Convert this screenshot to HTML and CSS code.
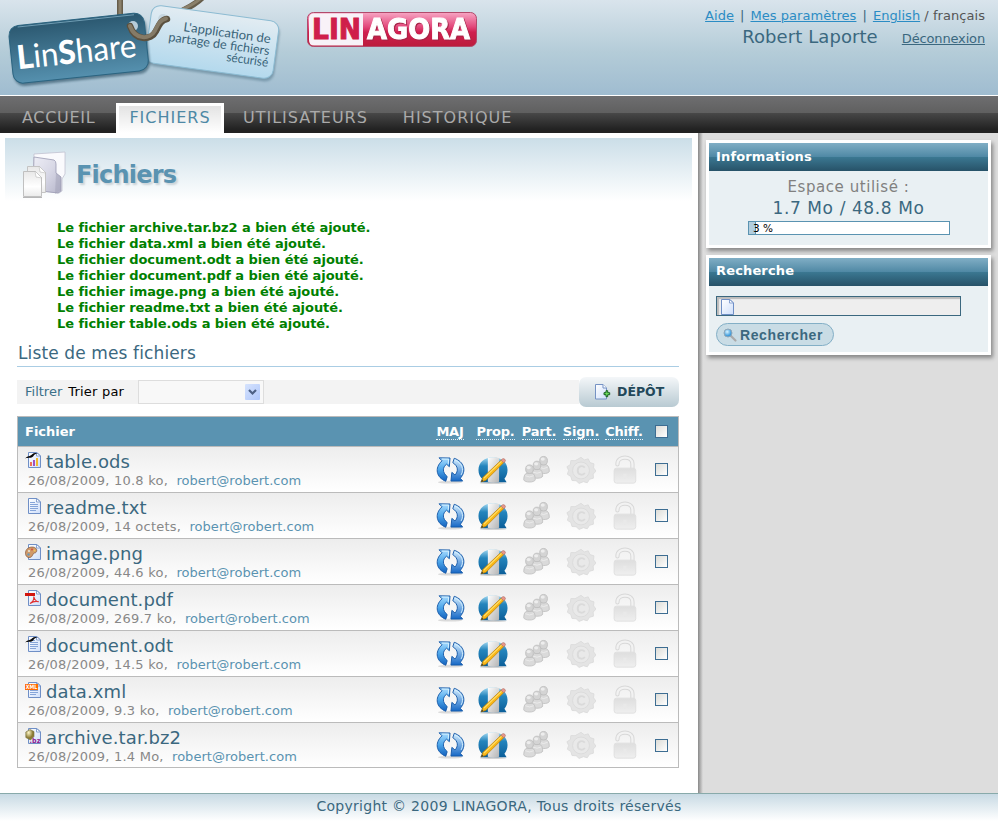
FILE: index.html
```
<!DOCTYPE html>
<html lang="fr">
<head>
<meta charset="utf-8">
<title>LinShare - Fichiers</title>
<link rel="stylesheet" href="styles.css">
</head>
<body>
<svg class="defs" width="0" height="0" aria-hidden="true">
  <defs>
    <linearGradient id="gPage" x2="1" y2="1"><stop offset="0" stop-color="#fff"/><stop offset="1" stop-color="#cfdffb"/></linearGradient>
    <linearGradient id="gBlue" x2="0" y2="1"><stop offset="0" stop-color="#a9dcff"/><stop offset=".5" stop-color="#4ca6ea"/><stop offset="1" stop-color="#1260bd"/></linearGradient>
    <linearGradient id="gBlueB" x2="0" y2="1"><stop offset="0" stop-color="#d4eeff"/><stop offset="1" stop-color="#1668c6"/></linearGradient>
    <linearGradient id="gOrb" x2="0" y2="1"><stop offset="0" stop-color="#a5daf2"/><stop offset=".35" stop-color="#2485bd"/><stop offset="1" stop-color="#0b5e99"/></linearGradient>
    <linearGradient id="gBand" x2="1" y2="1"><stop offset="0" stop-color="#fff"/><stop offset="1" stop-color="#b5b5b5"/></linearGradient>
    <linearGradient id="gGray" x2="0" y2="1"><stop offset="0" stop-color="#dedede"/><stop offset="1" stop-color="#efefef"/></linearGradient>
    <linearGradient id="gTag1" x2="0" y2="1"><stop offset="0" stop-color="#2b5870"/><stop offset="1" stop-color="#5590ae"/></linearGradient>
    <linearGradient id="gTag2" x2="0" y2="1"><stop offset="0" stop-color="#e2ecf2"/><stop offset="1" stop-color="#b4d9ed"/></linearGradient>
    <linearGradient id="gRed" x2="0" y2="1"><stop offset="0" stop-color="#f7a5c3"/><stop offset=".42" stop-color="#e2487b"/><stop offset=".58" stop-color="#cf1f4f"/><stop offset="1" stop-color="#bb1c3c"/></linearGradient>
    <linearGradient id="gFold" x2="1" y2="1"><stop offset="0" stop-color="#eeeef6"/><stop offset=".5" stop-color="#d8d8e6"/><stop offset="1" stop-color="#b6b6ca"/></linearGradient>
    <linearGradient id="gSheet" x2="0" y2="1"><stop offset="0" stop-color="#e8e8e8"/><stop offset=".6" stop-color="#fff"/><stop offset="1" stop-color="#eaeaea"/></linearGradient>
    <radialGradient id="gGold" cx=".35" cy=".3"><stop offset="0" stop-color="#fff8c8"/><stop offset="1" stop-color="#8b7b34"/></radialGradient>
    <radialGradient id="gLens" cx=".4" cy=".35"><stop offset="0" stop-color="#d9f3ff"/><stop offset="1" stop-color="#3f9cdc"/></radialGradient>
    <filter id="soft" x="-20%" y="-20%" width="140%" height="150%"><feGaussianBlur stdDeviation="1.3"/></filter>
  </defs>
  <symbol id="page" viewBox="0 0 16 16">
    <path d="M3.500.5h8.500l3.500 3.500v11.500h-12z" fill="url(#gPage)" stroke="#6f8fc6"/>
    <path d="M11.500.5v3.500h4z" fill="#fff" stroke="#6f8fc6" stroke-width=".8"/>
  </symbol>
  <symbol id="txt" viewBox="0 0 16 16"><use href="#page"/><path d="M5 4.500h5M5 6.500h8M5 8.500h8M5 10.500h8M5 12.500h6" stroke="#86a5d9"/></symbol>
  <symbol id="ods" viewBox="0 0 16 16"><use href="#page"/>
    <path d="M5 10h2v4H5z" fill="#ef7155"/><path d="M8 8h2v6H8z" fill="#a050c0"/><path d="M11 6h2v8h-2z" fill="#f2ba2d"/>
    <path d="M0 6.500C2.500 3.600 5 4.600 7.200 2.200 9 .6 11 .8 13 1.600c-2.500 0-3.700 1-4.700 2.600C6 7 3.500 4.900 0 6.500z" fill="#080808"/></symbol>
  <symbol id="odt" viewBox="0 0 16 16"><use href="#txt"/>
    <path d="M0 6.500C2.500 3.600 5 4.600 7.200 2.200 9 .6 11 .8 13 1.600c-2.500 0-3.700 1-4.700 2.600C6 7 3.500 4.900 0 6.500z" fill="#080808"/></symbol>
  <symbol id="png" viewBox="0 0 16 16"><use href="#page"/>
    <path d="M.6 8c.5-4 5.400-6 9-4.500C13 5 12 9 9.500 9c-2 0-1.500 4-4.500 4.500C2 14 0 11.500.6 8z" fill="#d09a6a" stroke="#86583b" stroke-width=".7"/>
    <circle cx="4" cy="7" r="1.100" fill="#e8e6d8"/><circle cx="7" cy="5.500" r="1" fill="#d64e3f"/><circle cx="9.500" cy="6.500" r="1" fill="#f0c65c"/><circle cx="3.500" cy="10.500" r="1.200" fill="#6a97b7"/></symbol>
  <symbol id="pdf" viewBox="0 0 16 16"><use href="#page"/>
    <path d="M0 3h10v3H0z" fill="#d2150f"/><path d="M5 13.500c3-1.500 4-4.500 3.800-7 .7 3 2.200 5 5 5.300-3-1-6-.2-8.800 1.700z" fill="none" stroke="#e03030" stroke-width="1.100"/></symbol>
  <symbol id="xml" viewBox="0 0 16 16"><use href="#txt"/><path d="M0 2h13v6H0z" fill="#ff6a00"/></symbol>
  <symbol id="bz" viewBox="0 0 16 16"><use href="#page"/>
    <path d="M5 1.500l4 2v5L5.500 12 .8 9.500V4z" fill="url(#gGold)" stroke="#77703e" stroke-width=".6"/></symbol>
  <symbol id="refresh" viewBox="0 0 32 32">
    <ellipse cx="16" cy="29" rx="13" ry="1.500" fill="#aaa" opacity=".4"/>
    <path d="M4.300 3L16 3.200l-.7 9.300-3-2.700C8 13 7.500 18.500 13 23l-1.500 5C1.500 24-1 14 7.500 6.200z" fill="url(#gBlue)" stroke="#1559a8" stroke-linejoin="round"/>
    <path d="M20.500 3.500C31 7 34 17 27 24.800l2.500 3H17l1-9.300 3.300 2.800C25 17.500 25 12 19 8.200z" fill="url(#gBlueB)" stroke="#1559a8" stroke-linejoin="round"/>
    <path d="M7.500 4.300l7 .1-.3 5M21.300 5.300c7.500 3.500 10 10 6.500 16" stroke="#d8f2ff" fill="none"/>
  </symbol>
  <symbol id="edit" viewBox="0 0 32 32">
    <ellipse cx="16" cy="29.800" rx="14" ry="1.200" fill="#aaa" opacity=".5"/>
    <path d="M.5 16C.5 8 7 2.500 16 2.500S31.500 8 31.500 16c0 4-1.500 7-3.300 9.300L30.500 29H2.500l1.800-3.700C2 23 .5 20 .5 16z" fill="url(#gOrb)"/>
    <path d="M10.500 3.300c4-1.200 8-1.200 12 0V28.500q-6 2-12 0z" fill="url(#gBand)"/>
    <path d="M3.500 28.700l1.800-4.900L25 5.200l2.600 2.700L8.500 27z" fill="#f9b717" stroke="#b67700" stroke-width=".7"/>
    <path d="M5.800 24.200L25.200 5.800l.8.800L6.800 25z" fill="#ffe06c"/>
    <path d="M24.500 5.700l1.700-1.600c1.500-1 3.800 1.200 2.900 2.600l-1.700 1.600z" fill="#e99589" stroke="#9a655e" stroke-width=".5"/>
    <path d="M3.500 28.700l.8-2.300 1.500 1.400z" fill="#333"/>
  </symbol>
  <symbol id="user" viewBox="0 0 16 24"><path d="M1 20c0-5 1.500-7.500 4-8.300h6c2.500.8 4 3.300 4 8.300-1 3.500-13 3.500-14 0z" fill="#dadada" stroke="#bebebe"/><ellipse cx="8" cy="7" rx="4.700" ry="5.200" fill="#d4d4d4" stroke="#bcbcbc"/><ellipse cx="7" cy="5" rx="2.500" ry="2" fill="#ededed"/><path d="M3 15q5 3 10 0" stroke="#eee" fill="none"/></symbol>
  <symbol id="share" viewBox="0 0 32 32"><use href="#user" x="16" y="0" width="14" height="21"/><use href="#user" x="9" y="5" width="14" height="21"/><use href="#user" x="1" y="9" width="14" height="21"/></symbol>
  <symbol id="seal" viewBox="0 0 32 32">
    <path d="M16 2.500l3.500 2.700 4.200-1.100 1.900 4 4.200 1.300-.4 4.300 2.600 3.500-3 3.100.2 4.400-4.200 1.200-2.300 3.700-4.200-1.200L14 30.300l-3.200-2.900-4.400-.2-1.200-4.200L1.500 20.500l1.300-4.100L1 12.500l3.700-2.300.5-4.300 4.400.2z" fill="#e4e4e4" stroke="#dcdcdc"/>
    <circle cx="16" cy="16.500" r="9" fill="#e9e9e9" stroke="#dbdbdb"/><path d="M20 13.500c-2.500-3-7.500-1.500-7.500 3s5 6 7.700 2.700" fill="none" stroke="#dadada" stroke-width="2"/>
  </symbol>
  <symbol id="lock" viewBox="0 0 32 32">
    <path d="M9 10V9.500c0-9 16-9 16 0V15" fill="none" stroke="#d8d8d8" stroke-width="4.500" stroke-linecap="round"/><path d="M9 10V9.500c0-9 16-9 16 0V15" fill="none" stroke="#f2f2f2" stroke-width="2.400" stroke-linecap="round"/>
    <rect x="5.500" y="14" width="23" height="16" rx="2.500" fill="url(#gGray)" stroke="#dfdfdf"/><path d="M17 20v5" stroke="#e9e9e9" stroke-width="3"/>
  </symbol>
</svg>

<header class="top">
  <svg class="logo" width="300" height="95" viewBox="0 0 300 95" role="img" aria-label="LinShare">
    <path d="M120-2v18M202-2c-6 6-12 9-20 13" fill="none" stroke="#665d4b" stroke-width="6"/>
    <path d="M120-2v16M201-2c-6 6-12 8-18 11" fill="none" stroke="#8a806b" stroke-width="3"/>
    <g transform="translate(152.500 4.500) rotate(7.800)">
      <rect x="1" y="3" width="129" height="58" rx="9" fill="#55788c" opacity=".55" filter="url(#soft)"/>
      <rect width="128.500" height="58" rx="9" fill="url(#gTag2)" stroke="#8cbbd2"/>
    </g>
    <g transform="translate(7.500 26.500) rotate(-6)">
      <rect x="1" y="3" width="137" height="58" rx="11" fill="#284b5f" opacity=".6" filter="url(#soft)"/>
      <rect x=".5" width="136" height="58" rx="10" fill="url(#gTag1)" stroke="#2b6480"/>
      <path d="M10 1.500h117" stroke="#6f9db4" fill="none"/>
    </g>
    <g class="tag-name" transform="rotate(-6 20 69)"><text x="18" y="69" textLength="120" lengthAdjust="spacingAndGlyphs"><tspan class="heavy">L</tspan>in<tspan class="heavy">S</tspan>hare</text></g>
    <g class="tag-line">
      <text transform="translate(183 31) rotate(8)" textLength="88" lengthAdjust="spacingAndGlyphs">L'application de</text>
      <text transform="translate(168 41) rotate(8)" textLength="102" lengthAdjust="spacingAndGlyphs">partage de fichiers</text>
      <text transform="translate(226 61) rotate(8)" textLength="42" lengthAdjust="spacingAndGlyphs">sécurisé</text>
    </g>
    <circle cx="133" cy="26" r="5" fill="#b5cbd8"/><circle cx="163" cy="19" r="5" fill="#c6d6df"/>
    <path d="M130 26c5 15 21 15 26 5 3-6 5-11 11-12" fill="none" stroke="#5b513f" stroke-width="6.500" stroke-linecap="round"/>
    <path d="M130 26c5 14 20 14 25 4.500 3-6 5-10.500 11-12" fill="none" stroke="#857b67" stroke-width="4" stroke-linecap="round"/>
  </svg>
  <svg class="brand" width="172" height="38" viewBox="0 0 172 38" role="img" aria-label="LINAGORA">
    <rect x="1.500" y="1.500" width="169" height="34" rx="6" fill="url(#gRed)" stroke="#b14a6b"/>
    <path d="M57 2.500H8q-5 0-5 5V29q0 5.500 5 5.500h49z" fill="#f8f2f8"/>
    <text class="brand-red" x="6" y="28" textLength="49" lengthAdjust="spacingAndGlyphs">LIN</text>
    <text class="brand-white" x="61" y="28" textLength="103" lengthAdjust="spacingAndGlyphs">AGORA</text>
  </svg>
  <div class="account">
    <div class="links"><a href="#">Aide</a><span class="bar">|</span><a href="#">Mes paramètres</a><span class="bar">|</span><a href="#">English</a> / français</div>
    <div class="who"><span class="user-name">Robert Laporte</span><a class="logout" href="#">Déconnexion</a></div>
  </div>
</header>

<nav class="menu">
  <a href="#" class="home">ACCUEIL</a><a href="#" class="active">FICHIERS</a><a href="#">UTILISATEURS</a><a href="#" class="history">HISTORIQUE</a>
</nav>

<div class="columns">
  <main class="main">
    <div class="title">
      <svg width="44" height="50" viewBox="0 0 44 50">
        <path d="M12 3l31-2v22l-3 5v12l-3 2-26-3z" fill="#fafafd" stroke="#c2c2d0" stroke-width=".8"/>
        <path d="M12 6l20 3q2 1 2 4v9l5 4v14l-3 2-25-3z" fill="url(#gFold)" stroke="#9a9ab2" stroke-width=".8"/>
        <path d="M34 22l5 4v13l-6 4z" fill="#9d9db4" opacity=".45"/>
        <path d="M5.500 15.500h12l6 6v20h-18z" fill="url(#gSheet)" stroke="#c4c4c4"/>
        <path d="M17 15l1 6 6 1z" fill="#fff" stroke="#bbb" stroke-width=".6"/>
        <path d="M1.500 20.500h12l6 6v19h-18z" fill="url(#gSheet)" stroke="#c0c0c0"/>
        <path d="M13 20l1 6 6 1z" fill="#fff" stroke="#bbb" stroke-width=".6"/>
        <path d="M1 46.500h19" stroke="#888" opacity=".6"/>
      </svg>
      <h1>Fichiers</h1>
    </div>
    <ul class="messages">
      <li>Le fichier archive.tar.bz2 a bien été ajouté.</li>
      <li>Le fichier data.xml a bien été ajouté.</li>
      <li>Le fichier document.odt a bien été ajouté.</li>
      <li>Le fichier document.pdf a bien été ajouté.</li>
      <li>Le fichier image.png a bien été ajouté.</li>
      <li>Le fichier readme.txt a bien été ajouté.</li>
      <li>Le fichier table.ods a bien été ajouté.</li>
    </ul>
    <h2>Liste de mes fichiers</h2>
    <div class="toolbar">
      <div class="filter"><span class="filter-link">Filtrer</span><span class="sort">Trier par</span>
        <div class="select"><span class="arrow"><svg width="15" height="16" viewBox="0 0 15 16"><path d="M4 6l3.500 3.500L11 6" fill="none" stroke="#4d6185" stroke-width="2.200"/></svg></span></div>
      </div>
      <a class="deposit" href="#"><svg width="16" height="16" viewBox="0 0 16 16"><path d="M.5.5h7.500l3.500 3.500v11H.5z" fill="url(#gPage)" stroke="#7592c4"/><path d="M8 .5v3.500h3.500" fill="#fff" stroke="#7592c4"/><path d="M11 6.700h1.700v2h2v2h-2v2H11v-2H9v-2h2z" fill="#6fe05c" stroke="#175f22"/></svg>DÉPÔT</a>
    </div>

    <section class="files">
      <div class="head"><span class="col-file">Fichier</span><span class="col"><abbr>MAJ</abbr></span><span class="col prop"><abbr>Prop.</abbr></span><span class="col part"><abbr>Part.</abbr></span><span class="col"><abbr>Sign.</abbr></span><span class="col"><abbr>Chiff.</abbr></span><span class="col"><i class="box"></i></span></div>
    </section>
  </main>

  <aside class="side">
    <section class="panel info">
      <h3>Informations</h3>
      <div class="panel-body">
        <div class="space-label">Espace utilisé :</div>
        <div class="space-value">1.7 Mo / 48.8 Mo</div>
        <div class="quota"><span>3 %</span></div>
      </div>
    </section>
    <section class="panel search">
      <h3>Recherche</h3>
      <div class="panel-body">
        <div class="field"><svg width="16" height="16"><use href="#page"/></svg></div>
        <a class="search-button" href="#"><svg width="16" height="16" viewBox="0 0 16 16"><path d="M9 9l4.500 4.500" stroke="#aaa" stroke-width="2.200" stroke-linecap="round"/><circle cx="6" cy="6" r="4" fill="url(#gLens)" stroke="#91a7b7"/></svg>Rechercher</a>
      </div>
    </section>
  </aside>
</div>
<footer>Copyright © 2009 LINAGORA, Tous droits réservés</footer>
<script src="files.js"></script>
</body>
</html>
```
FILE: files.js
```
const files = [
  ["ods", "table.ods", "10.8 ko"],
  ["txt", "readme.txt", "14 octets"],
  ["png", "image.png", "44.6 ko"],
  ["pdf", "document.pdf", "269.7 ko"],
  ["odt", "document.odt", "14.5 ko"],
  ["xml", "data.xml", "9.3 ko"],
  ["bz", "archive.tar.bz2", "1.4 Mo"]
];
const labels = {
  xml: '<text x=".7" y="7.200" class="xml-label" textLength="11.700" lengthAdjust="spacingAndGlyphs">XML</text>',
  bz: '<text x="4.500" y="14.800" class="bz-label" textLength="11" lengthAdjust="spacingAndGlyphs">.bz</text>'
};
const actions = ["refresh", "edit", "share", "seal", "lock"];
const list = document.querySelector(".files");
for (const [icon, name, size] of files) {
  const cells = actions.map(a => `<span class="col"><svg width="30" height="30"><use href="#${a}"/></svg></span>`).join("");
  list.insertAdjacentHTML("beforeend",
    `<div class="row"><div class="file"><div class="name"><svg width="16" height="16"><use href="#${icon}"/>${labels[icon] || ""}</svg><a href="#">${name}</a></div>` +
    `<div class="meta">26/08/2009, ${size}, <a href="#">robert@robert.com</a></div></div>${cells}<span class="col"><i class="box"></i></span></div>`);
}
```
FILE: styles.css
```
* { box-sizing: border-box; }
body { margin: 0; width: 998px; height: 821px; overflow: hidden; background: #fff; color: #000; font: 13px/16px "DejaVu Sans", sans-serif; display: flex; flex-direction: column; }
a { color: inherit; text-decoration: none; }
h1, h2, h3, ul { margin: 0; padding: 0; font-weight: normal; }
ul { list-style: none; }
svg { display: block; flex: none; }
.defs { position: absolute; }

.top { height: 96px; display: flex; background: linear-gradient(#d9e4ec, #b4ccd8 55%, #9fbcd0); border-bottom: 1px solid #fff; }
.logo { overflow: hidden; }
.brand { margin: 11px 0 0 6px; }
.tag-name { fill: #fff; font: 33px Lato, sans-serif; }
.heavy { font-weight: 900; }
.tag-line { fill: #3a6479; font: 12.500px Lato, sans-serif; }
.brand-red, .brand-white { font: 900 28px "DejaVu Sans", sans-serif; stroke-width: 1px; }
.brand-red { fill: #cf1f4a; stroke: #cf1f4a; }
.brand-white { fill: #fff; stroke: #fff; filter: drop-shadow(1px 1px 0 #a32446); }
.xml-label { font: bold 6px "DejaVu Sans", sans-serif; fill: #fff; }
.bz-label { font: bold 7px "DejaVu Sans", sans-serif; fill: #8b168b; }

.account { margin: 8px 13px 0 auto; text-align: right; color: #555; }
.links { letter-spacing: .05px; }
.links a { color: #2b8cc4; text-decoration: underline; }
.bar { margin: 0 6px; color: #3a667c; }
.who { display: flex; justify-content: flex-end; align-items: center; height: 24px; margin-top: 1px; color: #3b687f; }
.user-name { font-size: 18px; letter-spacing: .08px; }
.logout { margin: 3px 0 0 24px; letter-spacing: -.15px; text-decoration: underline; }

.menu { height: 37px; display: flex; align-items: flex-end; padding-left: 10px; background: linear-gradient(#6e6e70, #606060 45%, #484848 46%, #222 90%); color: #aaa; font-size: 16px; letter-spacing: 1px; }
.menu a { height: 30px; padding: 0 12px; line-height: 29px; }
.menu .home { width: 98px; letter-spacing: .7px; }
.menu .active { margin-left: 8px; margin-right: 7px; padding: 0; width: 108px; border: 3px solid #fff; border-bottom: 0; line-height: 24px; background: linear-gradient(#e3e3e3, #fff); color: #4d88a5; text-align: center; }
.menu .history { margin-left: 11px; }

.columns { display: flex; height: 660px; }
.main { width: 698px; padding: 5px 6px 0 5px; }
.title { height: 70px; display: flex; padding: 13px 0 0 17px; background: linear-gradient(#cbdee8, #fff 90%); }
.title h1 { margin: 10px 0 0 10px; font: bold 24px/28px "DejaVu Sans", sans-serif; letter-spacing: -.8px; color: #5a93b1; text-shadow: 2px 2px 2px #cbd3d8; }
.messages { margin: 12px 0 0 52px; color: #008000; font-weight: bold; font-size: 13px; letter-spacing: -.06px; }
h2 { margin: 8px 13px 0 12px; height: 27px; padding-left: 1px; border-bottom: 1px solid #aacde4; font-size: 17px; line-height: 27px; letter-spacing: .12px; color: #3b687f; }
.toolbar { margin: 10px 13px 0 12px; height: 30px; display: flex; align-items: center; }
.filter { flex: 1; height: 24px; display: flex; align-items: center; padding-left: 8px; background: #f3f3f3; }
.filter-link { color: #3b7088; }
.sort { margin-left: 6px; letter-spacing: .2px; }
.select { margin-left: 14px; width: 126px; height: 24px; border: 1px solid #ddd; background: #f8f8f8; padding: 3px 3px; display: flex; justify-content: flex-end; }
.arrow { width: 15px; height: 16px; border-radius: 1px; background: linear-gradient(135deg, #d6e3fd, #afc7fb); }
.deposit { width: 100px; height: 30px; border-radius: 7px; display: flex; align-items: center; padding-left: 16px; gap: 6px; background: linear-gradient(#f4f7f9, #b8cad2); color: #23485a; font-weight: bold; font-size: 12.500px; }

.files { margin: 9px 13px 0 12px; border: 1px solid #bbb; border-bottom: 0; }
.head, .row { display: grid; grid-template-columns: 411px 42px 44px 44px 44px 42px 33px; align-items: center; }
.head { height: 30px; background: #5a93b1; color: #fff; font-weight: bold; border-bottom: 1px solid #bbb; }
.col-file { padding-left: 7px; }
.col { display: flex; justify-content: center; white-space: nowrap; }
.prop { padding-left: 5px; }
.part { padding-left: 4px; }
abbr { line-height: 15px; border-bottom: 1px dotted #e7f1f6; letter-spacing: -.2px; }
.row { height: 46px; background: linear-gradient(#ededed, #fff); border-bottom: 1px solid #bbb; }
.row:last-child { height: 45px; }
.box { width: 13px; height: 13px; border: 1px solid #3d6d92; background: linear-gradient(135deg, #dcdcd7, #fff); }
.file { align-self: start; padding: 5px 0 0 7px; }
.name { display: flex; gap: 5px; font-size: 18px; line-height: 20px; color: #3b687f; letter-spacing: .1px; }
.meta { margin: 1px 0 0 3px; color: #888; letter-spacing: .23px; }
.meta a { margin-left: 4px; color: #5a93b1; letter-spacing: .03px; }

.side { flex: 1; padding: 7px 7px 0 8px; background: linear-gradient(90deg, #888, #ddd 5px); }
.panel { border: 3px solid #fff; background: #e9f0f3; box-shadow: 2px 3px 4px #888; }
.panel h3 { height: 28px; padding-left: 7px; line-height: 28px; font-weight: bold; font-size: 13px; letter-spacing: .15px; color: #fff; background: linear-gradient(#80aec5, #5089a5 49%, #3b7892 50%, #275268); }
.info { height: 108px; }
.info .panel-body { text-align: center; }
.space-label { margin-top: 6px; font-size: 15px; line-height: 20px; letter-spacing: .55px; color: #808080; }
.space-value { font-size: 17px; line-height: 22px; letter-spacing: .6px; color: #3b687f; }
.quota { width: 202px; height: 14px; margin: 2px auto 0 39px; border: 1px solid #5a93b1; background: linear-gradient(90deg, #b3cedd 6px, #5a93b1 6px 7px, #fff 7px); font-size: 10.500px; line-height: 12px; text-align: left; padding-left: 4px; }
.search { height: 100px; margin-top: 7px; }
.search h3 { line-height: 26px; }
.search .panel-body { padding: 10px 7px 0; }
.field { width: 245px; height: 20px; border: 1px solid #3b687f; background: #eee; box-shadow: inset 2px 2px 1px #bbb; padding: 2px 0 0 1px; }
.search-button { width: 118px; height: 23px; margin-top: 7px; border: 1px solid #83afc6; border-radius: 12px; background: #c9dce5; display: flex; align-items: center; padding-left: 5px; gap: 2px; font: bold 14px "Liberation Sans", sans-serif; letter-spacing: .6px; color: #3b687f; }
footer { height: 28px; border-top: 1px solid #8aa; background: linear-gradient(#c8dae4, #fff); text-align: center; font-size: 14px; line-height: 25px; letter-spacing: .28px; color: #3b687f; }
```
